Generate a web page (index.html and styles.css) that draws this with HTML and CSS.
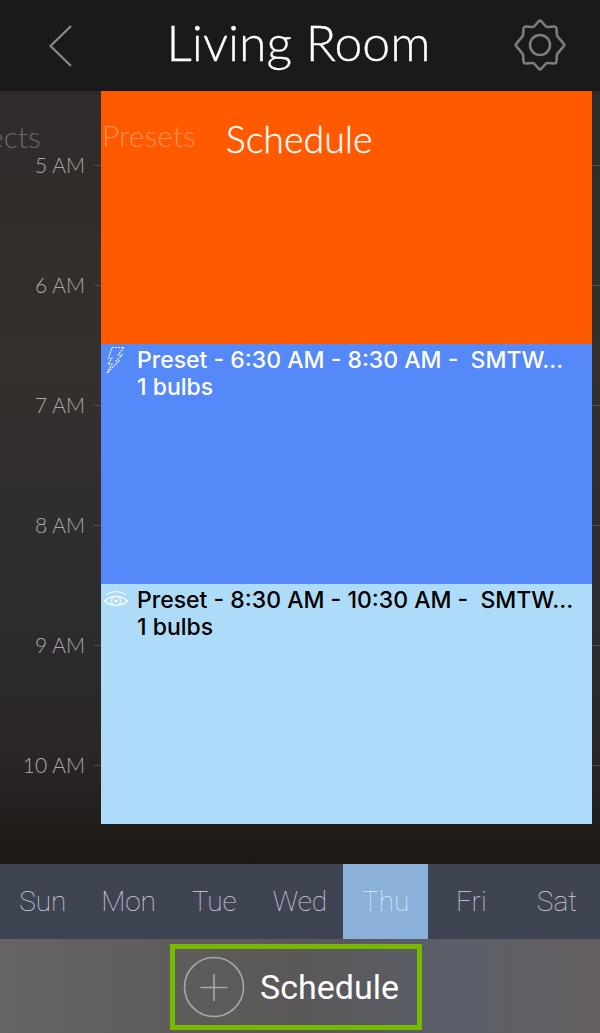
FILE: index.html
```html
<!DOCTYPE html>
<html lang="en">
<head>
<meta charset="utf-8">
<title>Living Room</title>
<link rel="stylesheet" href="styles.css">
</head>
<body>
<div class="screen">
  <header class="topbar">
    <svg class="back" width="28" height="46" viewBox="0 0 28 46"><path d="M24 3 L3.500 23 L24 43" fill="none" stroke="#8a8a8a" stroke-width="2.200"/></svg>
    <h1 class="title">Living Room</h1>
    <svg class="gear" width="54" height="54" viewBox="0 0 54 54"><path d="M25.500 3.500 Q27 2 28.500 3.500 L32.500 8 Q33.500 9.200 35 9 L41 8.500 Q43.500 8.400 43.500 11 L44 17 Q44.200 18.500 45.300 19.300 L50.500 25.500 Q52 27 50.500 28.500 L45.300 34.700 Q44.200 35.500 44 37 L43.500 43 Q43.500 45.600 41 45.500 L35 45 Q33.500 44.800 32.500 46 L28.500 50.500 Q27 52 25.500 50.500 L21.500 46 Q20.500 44.800 19 45 L13 45.500 Q10.500 45.600 10.500 43 L10 37 Q9.800 35.500 8.700 34.700 L3.500 28.500 Q2 27 3.500 25.500 L8.700 19.300 Q9.800 18.500 10 17 L10.500 11 Q10.500 8.400 13 8.500 L19 9 Q20.500 9.200 21.500 8 Z" fill="none" stroke="#7d7d7d" stroke-width="2.600" stroke-linejoin="round"/><circle cx="27" cy="27" r="10" fill="none" stroke="#7d7d7d" stroke-width="2.600"/></svg>
  </header>
  <main class="calendar">
    <div class="tab-faded-left">ects</div>
    <div class="hours">
      <div class="hour"><span class="hour-label">5 AM</span><i class="tick"></i></div>
      <div class="hour"><span class="hour-label">6 AM</span><i class="tick"></i></div>
      <div class="hour"><span class="hour-label">7 AM</span><i class="tick"></i></div>
      <div class="hour"><span class="hour-label">8 AM</span><i class="tick"></i></div>
      <div class="hour"><span class="hour-label">9 AM</span><i class="tick"></i></div>
      <div class="hour"><span class="hour-label">10 AM</span><i class="tick"></i></div>
    </div>
    <div class="events">
      <section class="event orange">
        <div class="tabs"><span class="tab-dim">Presets</span><span class="tab-on">Schedule</span></div>
      </section>
      <section class="event blue">
        <svg class="event-icon" width="22" height="28" viewBox="0 0 22 28"><path d="M8 1.500 H20 L14 9 H18 L12 15 H15 L3 27 L8 18 H4 L8 12 H4.500 Z" fill="none" stroke="#fff" stroke-width="1.100" stroke-dasharray="2 1"/></svg>
        <p class="event-text">Preset - 6:30 AM - 8:30 AM -&nbsp; SMTW...<br>1 bulbs</p>
      </section>
      <section class="event pale">
        <svg class="event-icon" width="26" height="22" viewBox="0 0 26 22"><path d="M1.500 12 Q13 2.500 24.500 12 Q13 21 1.500 12 Z" fill="none" stroke="#fff" stroke-width="1.200"/><path d="M3 5.500 Q13 -0.500 23 5.500" fill="none" stroke="#fff" stroke-width="1"/><circle cx="13" cy="12" r="4.500" fill="none" stroke="#fff" stroke-width="1.200"/><circle cx="13" cy="12" r="1.500" fill="#fff"/></svg>
        <p class="event-text">Preset - 8:30 AM - 10:30 AM -&nbsp; SMTW...<br>1 bulbs</p>
      </section>
    </div>
  </main>
  <nav class="days">
    <span class="day">Sun</span>
    <span class="day">Mon</span>
    <span class="day">Tue</span>
    <span class="day">Wed</span>
    <span class="day active">Thu</span>
    <span class="day">Fri</span>
    <span class="day">Sat</span>
  </nav>
  <footer class="bottom">
    <div class="add">
      <svg class="plus" width="62" height="62" viewBox="0 0 62 62"><circle cx="31" cy="31" r="29.500" fill="none" stroke="#a8a8a8" stroke-width="1.600"/><path d="M31 18 V45 M17.500 31.500 H44.500" fill="none" stroke="#a8a8a8" stroke-width="1.600"/></svg>
      <span class="add-label">Schedule</span>
    </div>
  </footer>
</div>
</body>
</html>
```
FILE: styles.css
```css
* { box-sizing: border-box; }
html, body { margin: 0; padding: 0; }
body { width: 600px; height: 1033px; overflow: hidden; background: #1a1a1a; }
.screen { width: 600px; height: 1033px; display: flex; flex-direction: column; overflow: hidden; }

.topbar { height: 91px; flex: none; position: relative; background: #1a1a1a; }
.back { position: absolute; left: 47px; top: 23px; }
.gear { position: absolute; left: 513px; top: 18px; }
.title { margin: 0; padding-top: 14px; padding-right: 3px; text-align: center; font: 300 50px/56px Lato, sans-serif; color: #fff; -webkit-text-stroke: 0.3px #fff; }

.calendar { height: 773px; flex: none; position: relative; overflow: hidden;
  background: linear-gradient(180deg, #2e2b2a 0%, #35302d 35%, #2c2b2e 68%, #2c2726 85%, #1c1816 100%); }
.tab-faded-left { position: absolute; left: -12px; top: 28px; font: 300 30px/34px Lato, sans-serif; color: #6a6764; }
.hours { position: absolute; left: 0; right: 0; top: 14px; display: flex; flex-direction: column; }
.hour { height: 120px; display: flex; align-items: center; justify-content: flex-end; position: relative; }
.hour-label { position: absolute; right: 515px; font: 300 21px/30px Lato, sans-serif; color: #aeaba8; }
.tick { position: absolute; left: 94px; right: 0; top: 60px; height: 1px; background: #4f4c4a; }

.events { position: absolute; left: 101px; top: 0; width: 491px; display: flex; flex-direction: column; }
.event { position: relative; }
.orange { height: 253px; background: #ff5a00; }
.blue { height: 240px; background: #5588f8; color: #fff; }
.pale { height: 240px; background: #aedbf8; color: #000; }
.tabs { display: flex; align-items: flex-start; padding-top: 27px; padding-left: 1px; gap: 30px; }
.tab-dim { font: 300 30px/34px Lato, sans-serif; color: #ff8f55; }
.tab-on { font: 300 37.500px/42px Lato, sans-serif; color: #fff; -webkit-text-stroke: 0.3px #fff; }
.event-icon { position: absolute; left: 3px; top: 2px; }
.pale .event-icon { left: 2px; top: 5px; }
.event-text { margin: 0; padding: 3px 0 0 36px; font: 500 23px/27px Inter, sans-serif; white-space: nowrap; }

.days { height: 75px; flex: none; display: flex; background: #3f4453; }
.day { display: flex; align-items: center; justify-content: center; font: 100 28px/34px Roboto, sans-serif; color: #d0d2d8; width: 85.700px; }
.day.active { background: #8ab1d9; color: #dbe7f5; }

.bottom { height: 94px; flex: none; display: flex; justify-content: center; padding-top: 5px; padding-right: 8px;
  background: linear-gradient(90deg, #666463 0%, #595857 50%, #5b5f6a 75%, #645f60 100%); }
.add { width: 252px; height: 86px; border: 5px solid #76b900; display: flex; align-items: center; padding-left: 8px; gap: 15px; }
.add-label { font: 400 34px/42px Roboto, sans-serif; color: #fff; }
```
